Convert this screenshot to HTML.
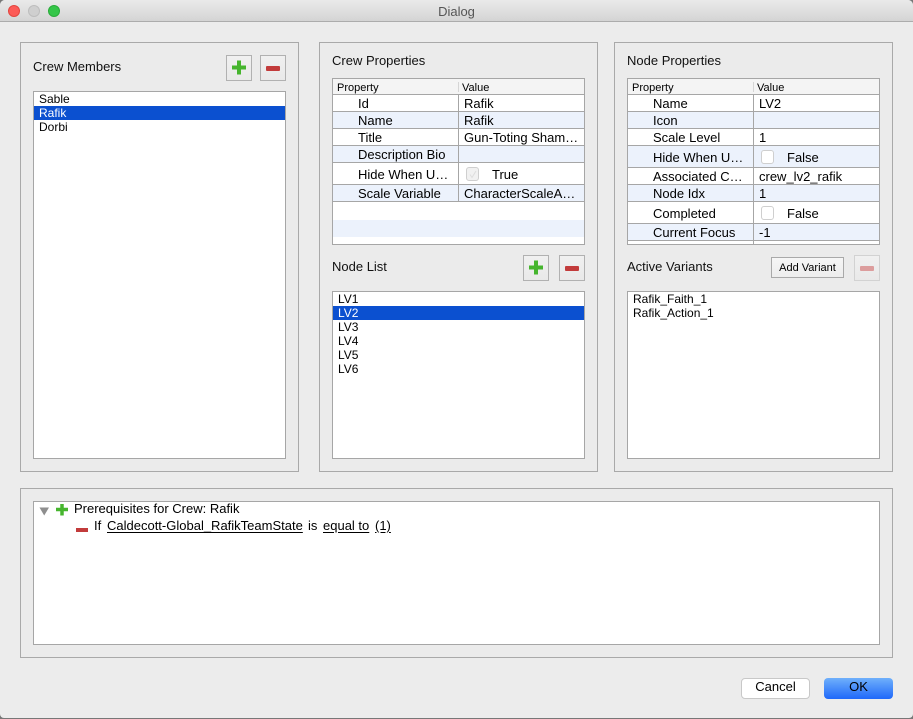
<!DOCTYPE html>
<html><head><meta charset="utf-8"><style>
*{box-sizing:border-box}
html,body{margin:0;padding:0;width:913px;height:719px;overflow:hidden;background:#777}
body{position:relative;font-family:"Liberation Sans",sans-serif;font-size:12px;color:#000}
div{position:absolute}
#win{left:0;top:0;width:913px;height:718px;background:#ececec;border-radius:5px 5px 4px 4px;overflow:hidden}
#bar{left:0;top:0;width:913px;height:22px;background:linear-gradient(#eaeaea,#d4d4d4);border-bottom:1px solid #acacac;text-align:center;font-size:13px;line-height:23px;color:#555}
.tl{width:12px;height:12px;border-radius:50%;top:5px}
.panel{border:1px solid #a9a9a9;background:#ebebeb}
.list{background:#fff;border:1px solid #a6a6a6;overflow:hidden}
.row{left:0;right:0;height:14px;line-height:14px;padding-left:5px;font-size:12px;white-space:nowrap}
.sel{background:#0b50d0;color:#fff}
.lbl{font-size:13px;line-height:16px;white-space:nowrap;color:#111}
.tb{width:26px;height:26px;border:1px solid #b1b1b1;background:linear-gradient(#f0f0f0,#e9e9e9)}
.table{background:#fff;border:1px solid #a6a6a6;overflow:hidden;width:253px;height:167px;top:78px}
.hd{left:0;top:0;width:251px;height:16px;background:#f4f4f4;border-bottom:1px solid #a6a6a6;font-size:11px;line-height:18px}
.tr{left:0;width:251px;border-bottom:1px solid #a6a6a6;font-size:13px;white-space:nowrap}
.alt{background:#ecf2fc}
.c1{left:25px;top:0;bottom:0;white-space:nowrap}
.c2{left:131px;top:0;bottom:0;white-space:nowrap}
.vl{left:125px;top:0;bottom:0;width:1px;background:#a6a6a6}
.chk{left:133px;top:4px;width:13px;height:14px;border:1px solid #cfcfcf;border-radius:3px;background:#fff}
.chk.dis{background:#f1f1f1}
.ct{left:159px;top:0;bottom:0}
svg{position:absolute;overflow:visible}
u{text-underline-offset:2px}
</style></head><body>
<div id="win">
<div id="bar">Dialog</div>
<div class="tl" style="left:8px;background:#fc5b57;border:1px solid #e2463f"></div>
<div class="tl" style="left:28px;background:#cfcfcf;border:1px solid #bdbdbd"></div>
<div class="tl" style="left:48px;background:#35c649;border:1px solid #2aac3a"></div>

<div class="panel" style="left:20px;top:42px;width:279px;height:430px"></div>
<div class="panel" style="left:319px;top:42px;width:279px;height:430px"></div>
<div class="panel" style="left:614px;top:42px;width:279px;height:430px"></div>
<div class="panel" style="left:20px;top:488px;width:873px;height:170px"></div>

<div class="lbl" style="left:33px;top:59px">Crew Members</div>
<div class="tb" style="left:226px;top:55px"><svg width="24" height="24"><path d="M5 11.500H19M12 4.500V18.500" stroke="#46b52e" stroke-width="4"/></svg></div>
<div class="tb" style="left:260px;top:55px"><svg width="24" height="24"><rect x="5" y="10" width="14" height="5" rx="1" fill="#c23b3b"/></svg></div>
<div class="list" style="left:33px;top:91px;width:253px;height:368px">
<div class="row" style="top:0">Sable</div>
<div class="row sel" style="top:14px">Rafik</div>
<div class="row" style="top:28px">Dorbi</div>
</div>

<div class="lbl" style="left:332px;top:53px">Crew Properties</div>
<div class="table" style="left:332px">
<div class="hd"><div style="left:4px">Property</div><div style="left:125px;top:3px;width:1px;height:10px;background:#d5d5d5"></div><div style="left:129px">Value</div></div>
<div class="tr" style="top:16px;height:17px;line-height:18px"><div class="c1">Id</div><div class="c2">Rafik</div><div class="vl"></div></div>
<div class="tr alt" style="top:33px;height:17px;line-height:18px"><div class="c1">Name</div><div class="c2">Rafik</div><div class="vl"></div></div>
<div class="tr" style="top:50px;height:17px;line-height:18px"><div class="c1">Title</div><div class="c2">Gun-Toting Sham…</div><div class="vl"></div></div>
<div class="tr alt" style="top:67px;height:17px;line-height:18px"><div class="c1">Description Bio</div><div class="vl"></div></div>
<div class="tr" style="top:84px;height:22px;line-height:23px"><div class="c1">Hide When U…</div><div class="vl"></div><div class="chk dis"><svg width="12" height="12"><path d="M3 6.500L5 9.500L9 3" stroke="#ddd" fill="none"/></svg></div><div class="ct">True</div></div>
<div class="tr alt" style="top:106px;height:17px;line-height:18px"><div class="c1">Scale Variable</div><div class="c2">CharacterScaleA…</div><div class="vl"></div></div>
<div class="alt" style="left:0;top:141px;width:251px;height:17px"></div>
</div>

<div class="lbl" style="left:332px;top:259px">Node List</div>
<div class="tb" style="left:523px;top:255px"><svg width="24" height="24"><path d="M5 11.500H19M12 4.500V18.500" stroke="#46b52e" stroke-width="4"/></svg></div>
<div class="tb" style="left:559px;top:255px"><svg width="24" height="24"><rect x="5" y="10" width="14" height="5" rx="1" fill="#c23b3b"/></svg></div>
<div class="list" style="left:332px;top:291px;width:253px;height:168px">
<div class="row" style="top:0">LV1</div>
<div class="row sel" style="top:14px">LV2</div>
<div class="row" style="top:28px">LV3</div>
<div class="row" style="top:42px">LV4</div>
<div class="row" style="top:56px">LV5</div>
<div class="row" style="top:70px">LV6</div>
</div>

<div class="lbl" style="left:627px;top:53px">Node Properties</div>
<div class="table" style="left:627px">
<div class="hd"><div style="left:4px">Property</div><div style="left:125px;top:3px;width:1px;height:10px;background:#d5d5d5"></div><div style="left:129px">Value</div></div>
<div class="tr" style="top:16px;height:17px;line-height:18px"><div class="c1">Name</div><div class="c2">LV2</div><div class="vl"></div></div>
<div class="tr alt" style="top:33px;height:17px;line-height:18px"><div class="c1">Icon</div><div class="vl"></div></div>
<div class="tr" style="top:50px;height:17px;line-height:18px"><div class="c1">Scale Level</div><div class="c2">1</div><div class="vl"></div></div>
<div class="tr alt" style="top:67px;height:22px;line-height:23px"><div class="c1">Hide When U…</div><div class="vl"></div><div class="chk"></div><div class="ct">False</div></div>
<div class="tr" style="top:89px;height:17px;line-height:18px"><div class="c1">Associated C…</div><div class="c2">crew_lv2_rafik</div><div class="vl"></div></div>
<div class="tr alt" style="top:106px;height:17px;line-height:18px"><div class="c1">Node Idx</div><div class="c2">1</div><div class="vl"></div></div>
<div class="tr" style="top:123px;height:22px;line-height:23px"><div class="c1">Completed</div><div class="vl"></div><div class="chk"></div><div class="ct">False</div></div>
<div class="tr alt" style="top:145px;height:17px;line-height:18px"><div class="c1">Current Focus</div><div class="c2">-1</div><div class="vl"></div></div>
<div style="left:125px;top:162px;width:1px;height:3px;background:#a6a6a6"></div>
</div>

<div class="lbl" style="left:627px;top:259px">Active Variants</div>
<div style="left:771px;top:257px;width:73px;height:21px;border:1px solid #a9a9a9;background:linear-gradient(#f6f6f6,#ededed);font-size:11px;line-height:20px;text-align:center">Add Variant</div>
<div class="tb" style="left:854px;top:255px;border-color:#d2d2d2"><svg width="24" height="24"><rect x="5" y="10" width="14" height="5" rx="1" fill="#dc9d9d"/></svg></div>
<div class="list" style="left:627px;top:291px;width:253px;height:168px">
<div class="row" style="top:0">Rafik_Faith_1</div>
<div class="row" style="top:14px">Rafik_Action_1</div>
</div>

<div class="list" style="left:33px;top:501px;width:847px;height:144px">
<svg style="left:5px;top:5px" width="10" height="8"><path d="M0.500 0.500H10L5.200 8.500Z" fill="#8e8e8e"/></svg>
<svg style="left:22px;top:2px" width="12" height="12"><path d="M0 5.500H12M6 0V11.500" stroke="#46b52e" stroke-width="3.500"/></svg>
<div style="left:40px;top:0;font-size:13px;line-height:14px;white-space:nowrap">Prerequisites for Crew: Rafik</div>
<svg style="left:42px;top:26px" width="12" height="4"><rect width="12" height="4" fill="#c23b3b"/></svg>
<div style="left:60px;top:17px;font-size:13px;line-height:14px;white-space:nowrap">If</div>
<div style="left:73px;top:17px;font-size:13px;line-height:14px;white-space:nowrap"><u>Caldecott-Global_RafikTeamState</u></div>
<div style="left:274px;top:17px;font-size:13px;line-height:14px;white-space:nowrap">is</div>
<div style="left:289px;top:17px;font-size:13px;line-height:14px;white-space:nowrap"><u>equal to</u></div>
<div style="left:341px;top:17px;font-size:13px;line-height:14px;white-space:nowrap"><u>(1)</u></div>
</div>

<div style="left:741px;top:678px;width:69px;height:21px;background:#fff;border:1px solid #c8c8c8;border-radius:4px;font-size:13px;line-height:16px;text-align:center">Cancel</div>
<div style="left:824px;top:678px;width:69px;height:21px;background:linear-gradient(#6fb0fb,#1f68fa);border-radius:4px;font-size:13px;line-height:18px;text-align:center">OK</div>
</div>
</body></html>
